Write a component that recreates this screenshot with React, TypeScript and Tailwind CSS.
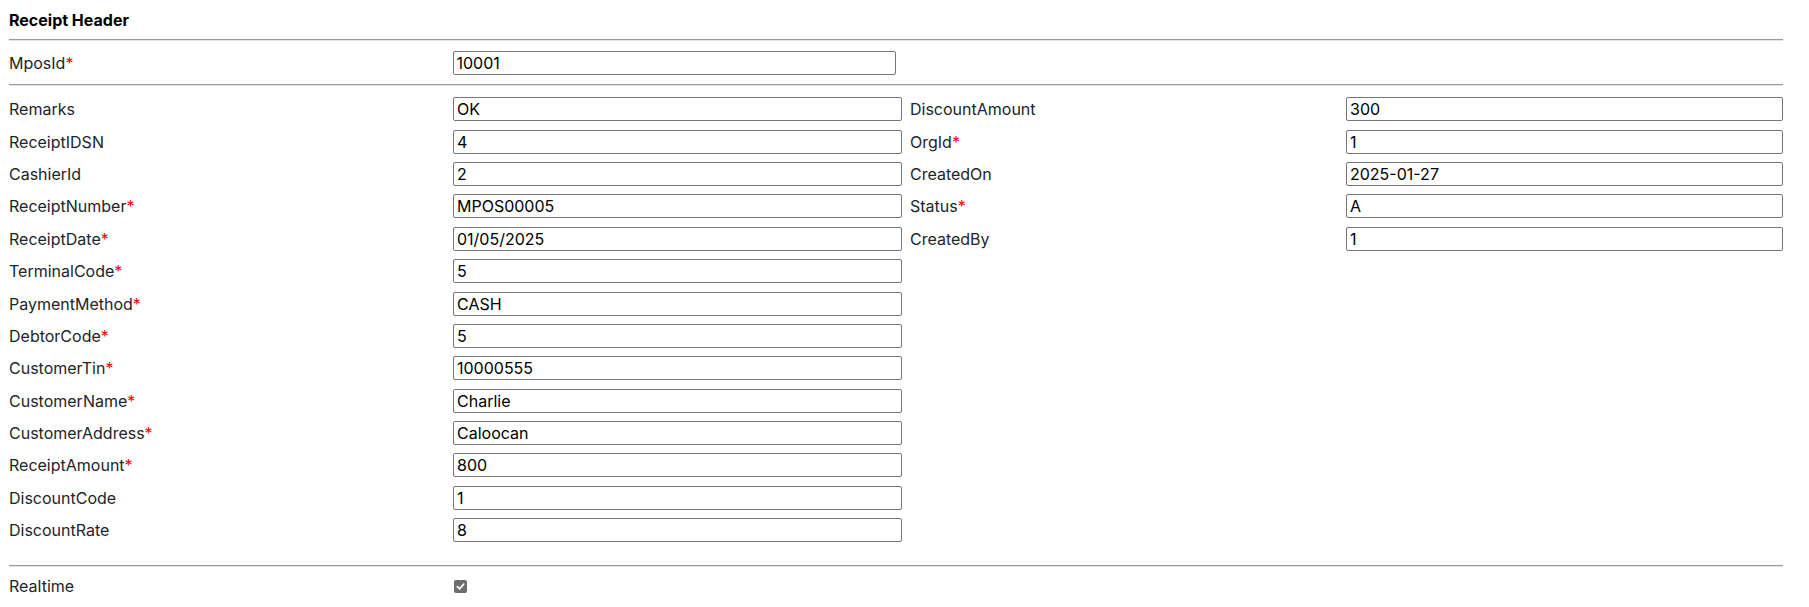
import React from "react";

type Field = { label: string; value: string; req?: boolean };

const left: Field[] = [
  { label: "Remarks", value: "OK" },
  { label: "ReceiptIDSN", value: "4" },
  { label: "CashierId", value: "2" },
  { label: "ReceiptNumber", value: "MPOS00005", req: true },
  { label: "ReceiptDate", value: "01/05/2025", req: true },
  { label: "TerminalCode", value: "5", req: true },
  { label: "PaymentMethod", value: "CASH", req: true },
  { label: "DebtorCode", value: "5", req: true },
  { label: "CustomerTin", value: "10000555", req: true },
  { label: "CustomerName", value: "Charlie", req: true },
  { label: "CustomerAddress", value: "Caloocan", req: true },
  { label: "ReceiptAmount", value: "800", req: true },
  { label: "DiscountCode", value: "1" },
  { label: "DiscountRate", value: "8" },
];

const right: Field[] = [
  { label: "DiscountAmount", value: "300" },
  { label: "OrgId", value: "1", req: true },
  { label: "CreatedOn", value: "2025-01-27" },
  { label: "Status", value: "A", req: true },
  { label: "CreatedBy", value: "1" },
];

function Label({ f }: { f: Field }) {
  return (
    <span className="text-[16px] leading-[20px] text-[#212529]">
      {f.label}
      {f.req && <span className="text-[#ff0000]">*</span>}
    </span>
  );
}

function Input({ value }: { value: string }) {
  return (
    <input
      readOnly
      defaultValue={value}
      className="h-[24px] w-full border border-[#767676] rounded-[2px] bg-white pl-[3px] pr-[2px] text-[16px] leading-[20px] text-black outline-none font-['Inter',sans-serif]"
    />
  );
}

function Hr() {
  return <div className="h-0 border-t border-t-[#9a9a9a] border-b border-b-[#e4e4e4]" />;
}

function Rows({ fields, cols }: { fields: Field[]; cols: string }) {
  return (
    <div className="flex flex-col">
      {fields.map((f) => (
        <div key={f.label} className={`grid ${cols} h-[32.4px] items-center`}>
          <Label f={f} />
          <Input value={f.value} />
        </div>
      ))}
    </div>
  );
}

export default function App() {
  return (
    <div className="w-[1809px] h-[607px] bg-white font-['Inter',sans-serif] text-[#212529] overflow-hidden">
      <div className="pl-[9px] pr-[26px]">
        <div className="pt-[10px] pb-[9px] text-[16px] leading-[20px] font-bold text-black">
          Receipt Header
        </div>
        <Hr />
        <div className="grid grid-cols-4 h-[43px] items-center">
          <Label f={{ label: "MposId", value: "", req: true }} />
          <Input value="10001" />
          <div />
          <div />
        </div>
        <Hr />
        <div className="flex gap-[8px] pt-[7px]">
          <div className="w-[893px]">
            <Rows fields={left} cols="grid-cols-[444px_449px]" />
          </div>
          <div className="flex-1">
            <Rows fields={right} cols="grid-cols-[436px_437px]" />
          </div>
        </div>
        <div className="h-[19px]" />
        <Hr />
        <div className="grid grid-cols-4 h-[38px] items-center">
          <Label f={{ label: "Realtime", value: "" }} />
          <div className="flex items-center">
            <span className="ml-[1px] flex h-[13px] w-[13px] items-center justify-center rounded-[2px] bg-[#6e6e6e]">
              <svg width="9" height="9" viewBox="0 0 10 10" fill="none">
                <path d="M1.5 5.2 L4 7.6 L8.6 2.4" stroke="white" strokeWidth="1.8" strokeLinecap="round" strokeLinejoin="round" />
              </svg>
            </span>
          </div>
          <div />
          <div />
        </div>
      </div>
    </div>
  );
}
